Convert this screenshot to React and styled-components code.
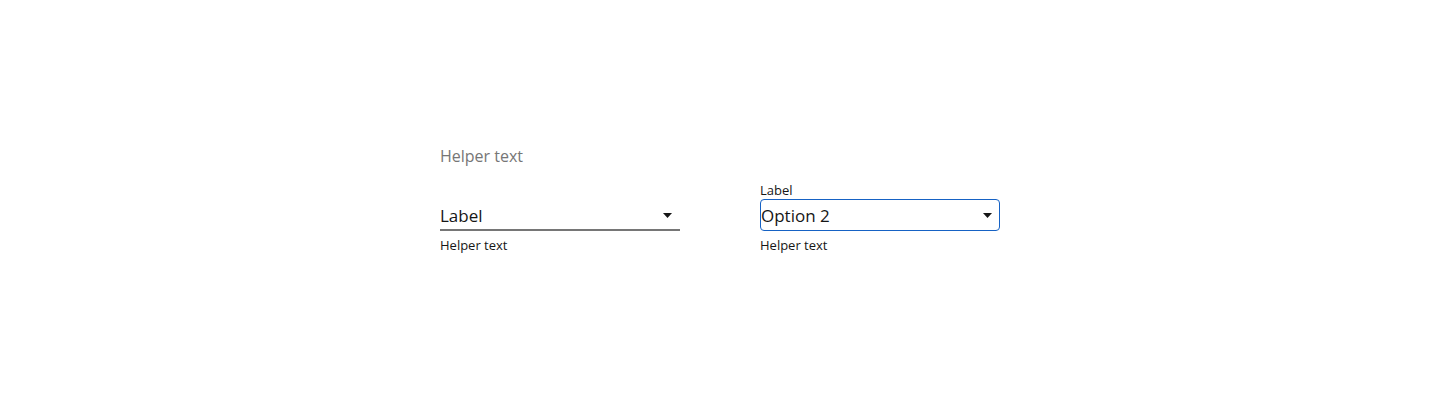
import React from "react";
import styled, { createGlobalStyle } from "styled-components";

const GlobalStyle = createGlobalStyle`
  body {
    margin: 0;
    background: #ffffff;
    font-family: "Open Sans", "Noto Sans", sans-serif;
    color: #161616;
  }
`;

const Page = styled.div`
  width: 560px;
  margin: 0 auto;
  padding-top: 145px;
`;

const Heading = styled.div`
  font-size: 16px;
  line-height: 22px;
  color: #767676;
  margin-bottom: 15px;
`;

const Row = styled.div`
  display: flex;
  align-items: flex-end;
  gap: 80px;
`;

const Field = styled.div`
  width: 240px;
  display: flex;
  flex-direction: column;
`;

const FloatLabel = styled.div`
  font-size: 13px;
  line-height: 17px;
  color: #161616;
`;

const SelectBox = styled.div`
  box-sizing: border-box;
  height: 32px;
  display: flex;
  align-items: center;
  justify-content: space-between;
  font-size: 17px;
  line-height: 23px;
  color: #161616;
  ${({ $outlined }) =>
    $outlined
      ? `
    border: 1px solid #1662c4;
    border-radius: 4px;
    padding: 0 7px 0 0;
  `
      : `
    border-bottom: 2px solid #767676;
    padding: 2px 8px 0 0;
  `}
`;

const Arrow = styled.svg`
  width: 9px;
  height: 5px;
  flex-shrink: 0;
`;

const Helper = styled.div`
  font-size: 13px;
  line-height: 17px;
  margin-top: 6px;
  color: #161616;
`;

const Caret = () => (
  <Arrow viewBox="0 0 9 5">
    <path d="M0 0 L9 0 L4.5 5 Z" fill="#161616" />
  </Arrow>
);

const Select = ({ label, value, outlined }) => (
  <Field>
    {outlined && <FloatLabel>{label}</FloatLabel>}
    <SelectBox $outlined={outlined}>
      <span>{outlined ? value : label}</span>
      <Caret />
    </SelectBox>
    <Helper>Helper text</Helper>
  </Field>
);

export default function App() {
  return (
    <>
      <GlobalStyle />
      <Page>
        <Heading>Helper text</Heading>
        <Row>
          <Select label="Label" />
          <Select label="Label" value="Option 2" outlined />
        </Row>
      </Page>
    </>
  );
}
